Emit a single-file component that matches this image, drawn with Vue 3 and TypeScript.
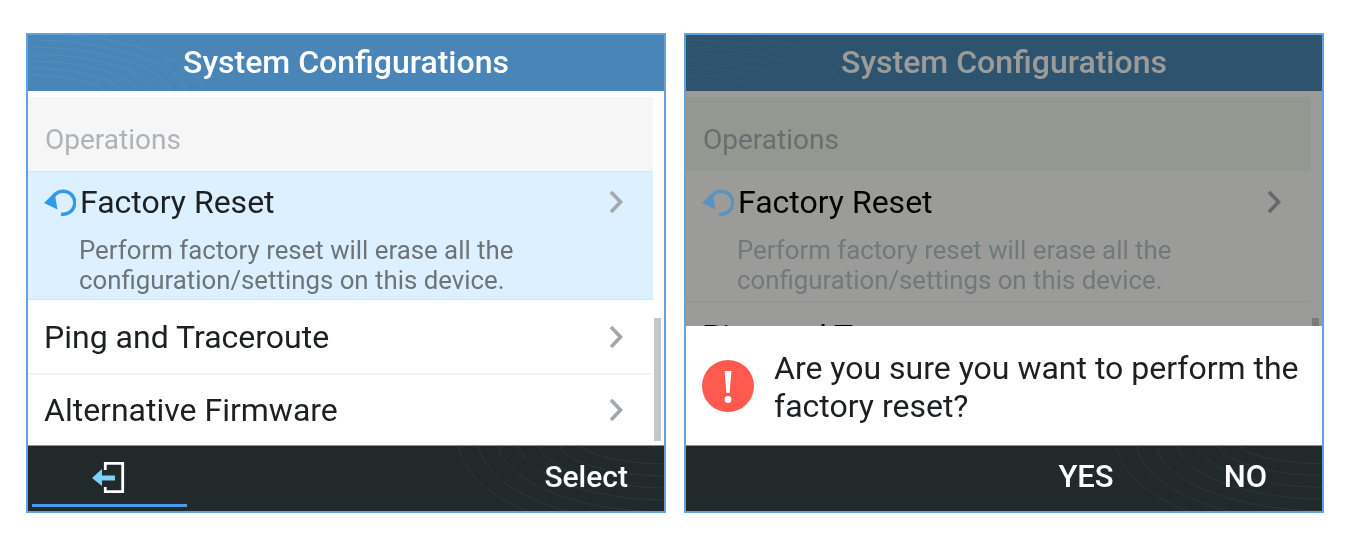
<script setup lang="ts">
const rows = ['Ping and Traceroute', 'Alternative Firmware']
const panels = [{ id: 'main', dim: false }, { id: 'confirm', dim: true }]
const arcs = [0, 1, 2, 3, 4, 5, 6]
</script>

<template>
  <main class="page">
    <section v-for="p in panels" :key="p.id" class="phone" :class="{ dim: p.dim }">
      <header class="title">
        <svg class="deco" viewBox="0 0 636 56" preserveAspectRatio="none" aria-hidden="true">
          <g fill="none" stroke="#fff" stroke-opacity=".06">
            <ellipse v-for="i in arcs" :key="i" cx="0" cy="62" :rx="80 + i * 16" :ry="22 + i * 7" />
          </g>
        </svg>
        <span class="title-text">System Configurations</span>
      </header>

      <div class="body">
        <div class="list">
          <div class="section"><span>Operations</span></div>
          <div class="row selected">
            <div class="row-main">
              <svg class="reset" viewBox="0 0 32 28" aria-hidden="true">
                <path d="M9 9.5 A11.5 11.5 0 1 1 17 26" fill="none" stroke="currentColor" stroke-width="3.4" />
                <path d="M0 15 L10.5 4.5 L13.5 21.5 Z" fill="currentColor" />
              </svg>
              <span class="name">Factory Reset</span>
              <svg class="chev" viewBox="0 0 16 24" aria-hidden="true"><path d="M3 2 L12.5 12 L3 22" /></svg>
            </div>
            <p class="desc">Perform factory reset will erase all the<br />configuration/settings on this device.</p>
          </div>
          <div v-for="(r, i) in rows" :key="r" class="row plain" :class="{ last: i === rows.length - 1 }">
            <span class="name">{{ r }}</span>
            <svg class="chev" viewBox="0 0 16 24" aria-hidden="true"><path d="M3 2 L12.5 12 L3 22" /></svg>
          </div>
        </div>
        <div class="scroll"><i></i></div>
      </div>

      <footer class="softkeys">
        <svg class="deco" viewBox="0 0 636 66" preserveAspectRatio="none" aria-hidden="true">
          <g fill="none" stroke="#fff" stroke-opacity=".06">
            <ellipse v-for="i in arcs" :key="i" cx="640" cy="-6" :rx="90 + i * 20" :ry="24 + i * 12" />
          </g>
        </svg>
        <template v-if="!p.dim">
          <div class="back">
            <svg class="exit" viewBox="0 0 36 34" aria-hidden="true">
              <path d="M15.3 9 V2.3 H32.7 V30.7 H15.3 V26" fill="none" stroke="#fff" stroke-width="2.8" />
              <path d="M2 17 L12 8 V14.6 H25 V19.4 H12 V25 Z" fill="#7fd0f5" />
            </svg>
          </div>
          <span class="key select">Select</span>
        </template>
        <template v-else>
          <span class="key yes">YES</span>
          <span class="key no">NO</span>
        </template>
      </footer>

      <template v-if="p.dim">
        <div class="shade"></div>
        <div class="dialog">
          <svg class="warn" viewBox="0 0 52 52" aria-hidden="true">
            <circle cx="26" cy="26" r="26" fill="#ff5a4d" />
            <path d="M22.6 11 H29.4 L27.6 33 H24.4 Z" fill="#fff" />
            <circle cx="26" cy="39.5" r="3.4" fill="#fff" />
          </svg>
          <p>Are you sure you want to perform the<br />factory reset?</p>
        </div>
      </template>
    </section>
  </main>
</template>

<style scoped>
.page {
  width: 1351px;
  height: 536px;
  box-sizing: border-box;
  padding: 33px 0 0 26px;
  display: flex;
  align-items: flex-start;
  gap: 18px;
  background: #fff;
  font-family: Roboto, "Liberation Sans", sans-serif;
  filter: blur(0.45px);
}
.phone {
  position: relative;
  width: 640px;
  height: 480px;
  box-sizing: border-box;
  border: 2px solid #63a2de;
  display: flex;
  flex-direction: column;
  overflow: hidden;
}
.title {
  position: relative;
  height: 56px;
  flex: none;
  background: #4a85b8;
  display: flex;
  align-items: center;
  justify-content: center;
}
.deco {
  position: absolute;
  inset: 0;
  width: 100%;
  height: 100%;
}
.title-text {
  position: relative;
  color: #fff;
  font-size: 32px;
  font-weight: 500;
  line-height: 54px;
  margin-bottom: 2px;
}
.body {
  height: 354px;
  flex: none;
  display: flex;
  background: #fff;
}
.list {
  width: 625px;
  flex: none;
  padding-top: 6px;
  box-sizing: border-box;
}
.section {
  height: 74px;
  box-sizing: border-box;
  padding: 28px 0 0 17px;
  background: #f6f6f6;
  color: #adb3b7;
  font-size: 28px;
  line-height: 30px;
}
.row {
  box-sizing: border-box;
}
.selected {
  height: 129px;
  background: #dcf0ff;
  border-top: 1px solid #cfe6f7;
  border-bottom: 1px solid #cfe6f7;
  padding: 12px 0 0 0;
}
.row-main {
  display: flex;
  align-items: center;
  height: 36px;
  padding-left: 16px;
}
.reset {
  position: relative;
  z-index: 1;
  width: 32px;
  height: 28px;
  flex: none;
  margin-right: 4px;
  color: #2f9bec;
}
.name {
  font-size: 32px;
  line-height: 36px;
  color: #1d2022;
  flex: 1;
}
.chev {
  width: 16px;
  height: 24px;
  flex: none;
  margin-right: 29px;
}
.chev path {
  fill: none;
  stroke: #a3a8ad;
  stroke-width: 3.6;
}
.desc {
  margin: 15px 0 0 51px;
  font-size: 25.8px;
  line-height: 30px;
  color: #6d7476;
}
.plain {
  height: 75px;
  display: flex;
  align-items: center;
  padding-left: 16px;
  border-bottom: 2px solid #f4f4f4;
}
.plain.last {
  height: 70px;
  border-bottom: 0;
}
.scroll {
  flex: 1;
  position: relative;
}
.scroll i {
  position: absolute;
  left: 1px;
  top: 227px;
  width: 7px;
  height: 123px;
  background: #c3c6ca;
}
.softkeys {
  position: relative;
  flex: 1;
  background: #22292b;
  border-top: 1px solid #8c9090;
  display: flex;
  align-items: center;
  padding-bottom: 5px;
  color: #fff;
}
.back {
  position: relative;
  width: 155px;
  height: 58px;
  margin-left: 4px;
  border-bottom: 3px solid #4a9cec;
  display: flex;
  align-items: center;
  justify-content: center;
  align-self: flex-start;
}
.exit {
  width: 36px;
  height: 34px;
  margin: 6px 4px 0 0;
}
.key {
  position: relative;
  font-size: 30px;
  font-weight: 500;
}
.select {
  margin-left: auto;
  margin-right: 36px;
}
.yes {
  margin-left: auto;
  font-size: 31px;
}
.no {
  margin: 0 55px 0 110px;
  font-size: 31px;
}
.shade {
  position: absolute;
  inset: 0 0 66px;
  background: rgba(5, 7, 0, 0.4);
}
.dim .section {
  background: #f3f9f1;
}
.dim .selected {
  height: 131px;
  background: #fff;
  border-color: transparent;
  border-bottom-color: #f0f0f0;
}
.dim .reset {
  color: #5b93bd;
}
.dim .desc {
  color: #bbc5cd;
}
.dim .name {
  color: #000;
}
.dim .plain {
  align-items: flex-start;
  padding-top: 16px;
}
.dim .plain .chev {
  align-self: flex-end;
  margin-bottom: 14px;
}
.dialog {
  position: absolute;
  z-index: 2;
  left: 0;
  right: 0;
  top: 291px;
  height: 119px;
  background: #fff;
  box-sizing: border-box;
  display: flex;
  align-items: center;
  padding-left: 16px;
}
.warn {
  width: 52px;
  height: 52px;
  flex: none;
  margin-right: 20px;
}
.dialog p {
  margin: 0;
  padding-top: 2px;
  font-size: 32px;
  line-height: 38px;
  color: #1d2022;
}
</style>
